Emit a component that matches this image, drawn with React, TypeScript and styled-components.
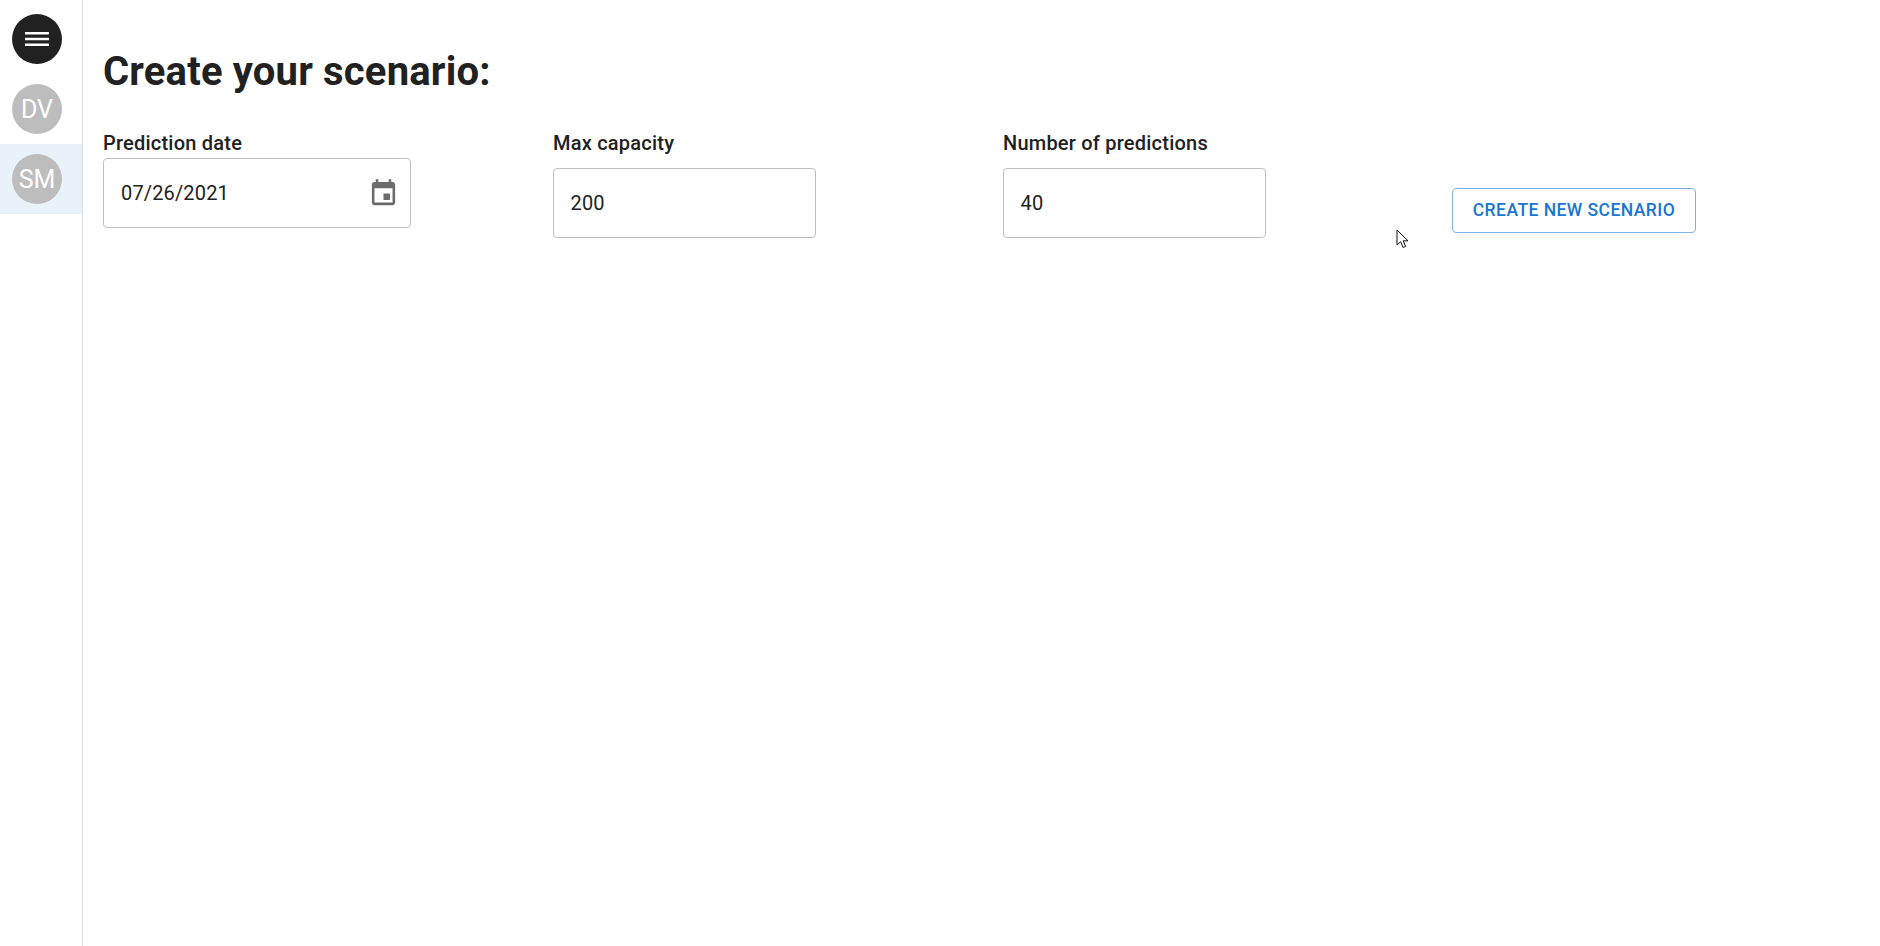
import React from 'react';
import styled, { createGlobalStyle } from 'styled-components';

const GlobalStyle = createGlobalStyle`
    html, body {
        margin: 0;
        padding: 0;
        background: #fff;
        font-family: Roboto, "Liberation Sans", sans-serif;
        color: #212121;
    }
`;

const App = () => (
    <Page>
        <GlobalStyle />
        <Sidebar>
            <MenuButton>
                <svg width="24" height="24" viewBox="0 0 24 24" fill="#fff">
                    <path d="M0 5h24v2.6H0zM0 10.7h24v2.6H0zM0 16.4h24V19H0z" />
                </svg>
            </MenuButton>
            <NavItem>
                <Avatar>DV</Avatar>
            </NavItem>
            <NavItem $active>
                <Avatar>SM</Avatar>
            </NavItem>
        </Sidebar>
        <Content>
            <Title>Create your scenario:</Title>
            <FormRow>
                <Field>
                    <Label>Prediction date</Label>
                    <DateBox>
                        <DateValue>07/26/2021</DateValue>
                        <svg width="31" height="31" viewBox="0 0 24 24" fill="#6b6b6b">
                            <path d="M17 12h-5v5h5v-5zM16 1v2H8V1H6v2H5c-1.11 0-1.99.9-1.99 2L3 19c0 1.1.89 2 2 2h14c1.1 0 2-.9 2-2V5c0-1.1-.9-2-2-2h-1V1h-2zm3 18H5V8h14v11z" />
                        </svg>
                    </DateBox>
                </Field>
                <Field>
                    <Label>Max capacity</Label>
                    <NumberBox>200</NumberBox>
                </Field>
                <Field>
                    <Label>Number of predictions</Label>
                    <NumberBox>40</NumberBox>
                </Field>
                <Field>
                    <OutlinedButton>Create new scenario</OutlinedButton>
                </Field>
            </FormRow>
        </Content>
        <Cursor width="13" height="20" viewBox="0 0 13 20">
            <path
                d="M1 1v15l3.6-3.3 2.5 5.8 2.6-1.1-2.5-5.6H12z"
                fill="#fff"
                stroke="#111"
                strokeWidth="1"
            />
        </Cursor>
    </Page>
);

export default App;

const Page = styled.div`
    position: relative;
    display: flex;
    width: 1880px;
    height: 946px;
    overflow: hidden;
`;

const Sidebar = styled.div`
    width: 82px;
    height: 100%;
    flex-shrink: 0;
    border-right: 1px solid #e0e0e0;
    padding-top: 14px;
    display: flex;
    flex-direction: column;
`;

const MenuButton = styled.div`
    width: 50px;
    height: 50px;
    margin: 0 0 10px 12px;
    border-radius: 50%;
    background: #212121;
    display: flex;
    align-items: center;
    justify-content: center;
`;

const NavItem = styled.div<{ $active?: boolean }>`
    height: 70px;
    padding: 10px 0 10px 12px;
    box-sizing: border-box;
    background: ${({ $active }) => ($active ? '#e9f1fa' : 'transparent')};
`;

const Avatar = styled.div`
    width: 50px;
    height: 50px;
    border-radius: 50%;
    background: #bdbdbd;
    color: #fff;
    font-size: 25px;
    line-height: 51px;
    text-align: center;
`;

const Content = styled.div`
    flex: 1;
    padding: 0 0 0 20px;
`;

const Title = styled.h1`
    margin: 0;
    padding-top: 49px;
    font-size: 40px;
    line-height: 46px;
    font-weight: 700;
    letter-spacing: 0.18px;
    color: #212121;
`;

const FormRow = styled.div`
    display: grid;
    grid-template-columns: repeat(4, 450px);
    margin-top: 33px;
`;

const Field = styled.div`
    display: flex;
    flex-direction: column;
    align-items: flex-start;
`;

const Label = styled.div`
    font-size: 20px;
    line-height: 30px;
    font-weight: 500;
    letter-spacing: 0.22px;
    color: #212121;
`;

const DateBox = styled.div`
    width: 308px;
    height: 70px;
    box-sizing: border-box;
    border: 1px solid #c0c0c0;
    border-radius: 4px;
    padding: 0 11px 0 17px;
    display: flex;
    align-items: center;
    justify-content: space-between;
`;

const DateValue = styled.span`
    font-size: 20px;
    letter-spacing: 0.15px;
`;

const NumberBox = styled.div`
    width: 263px;
    height: 70px;
    margin-top: 10px;
    box-sizing: border-box;
    border: 1px solid #c0c0c0;
    border-radius: 4px;
    padding: 0 16.5px;
    display: flex;
    align-items: center;
    font-size: 20px;
    letter-spacing: 0.15px;
`;

const OutlinedButton = styled.button`
    width: 244px;
    height: 45px;
    margin: 60px 0 0 -1px;
    background: #fff;
    border: 1px solid #7db3ea;
    border-radius: 4px;
    color: #1976d2;
    font-family: inherit;
    font-size: 17.5px;
    font-weight: 500;
    letter-spacing: 0.45px;
    text-transform: uppercase;
    padding: 0 0 2px;
`;

const Cursor = styled.svg`
    position: absolute;
    left: 1396px;
    top: 229px;
`;
